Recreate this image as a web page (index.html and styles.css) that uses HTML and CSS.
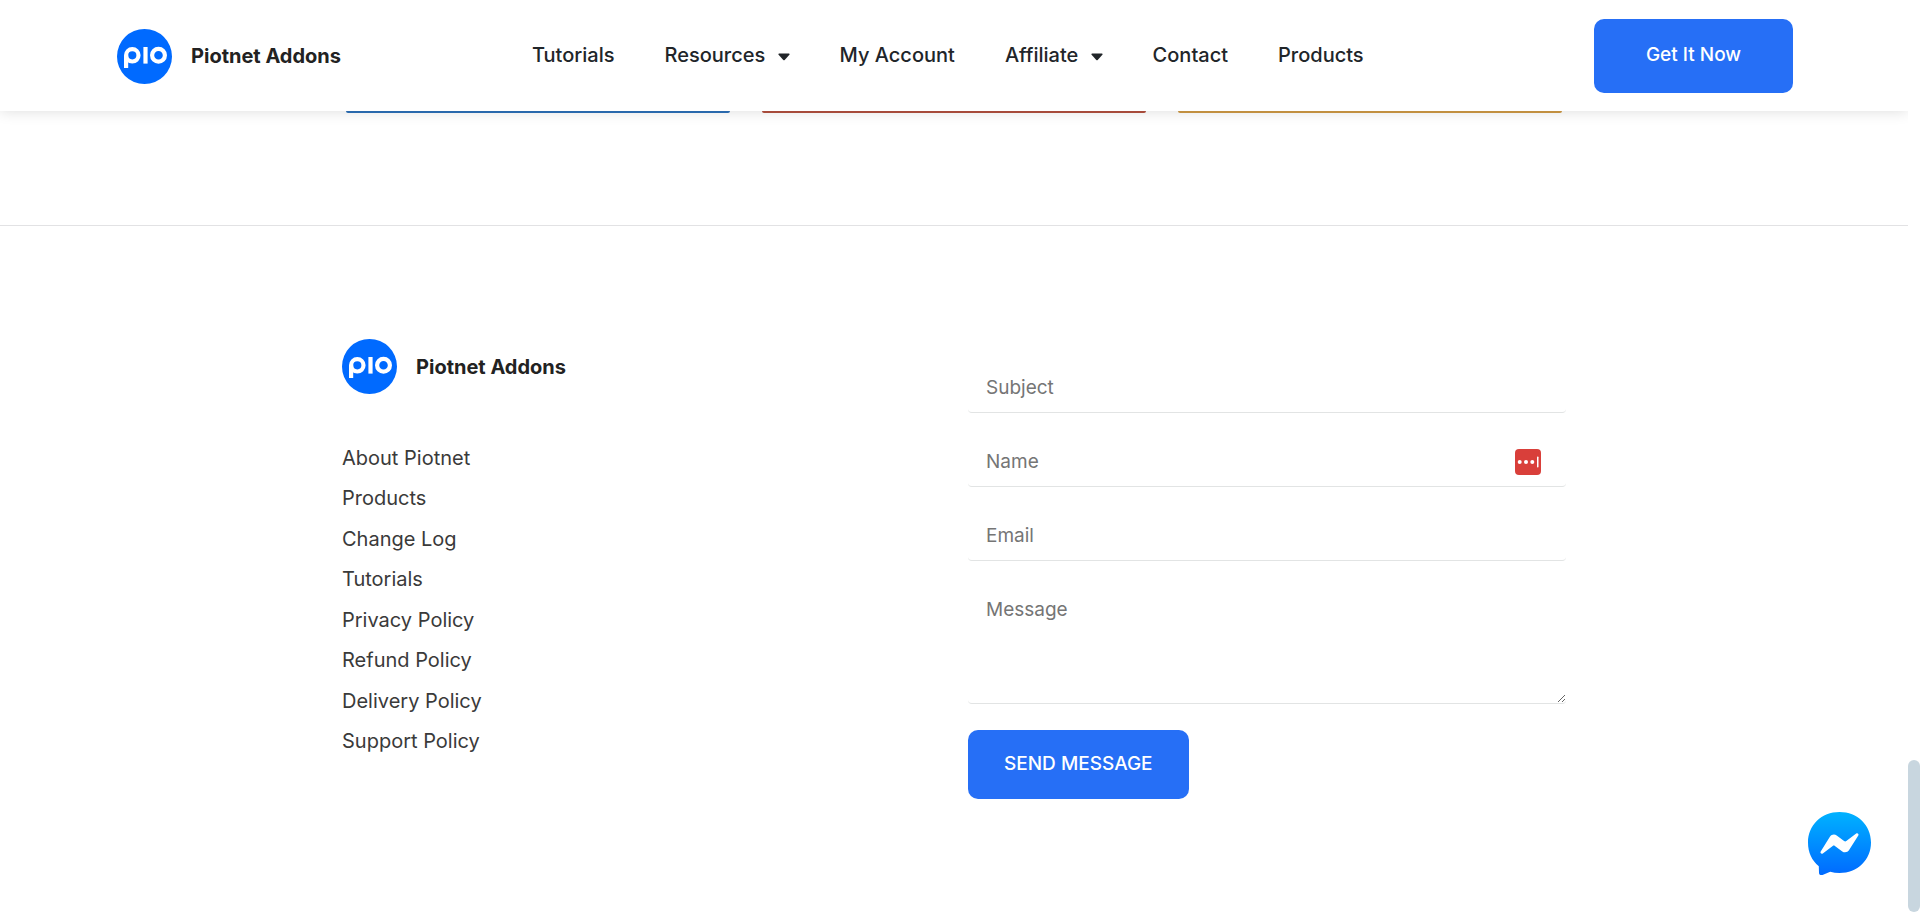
FILE: index.html
```
<!DOCTYPE html>
<html lang="en">
<head>
    <meta charset="utf-8">
    <meta name="viewport" content="width=device-width, initial-scale=1">
    <title>Piotnet Addons</title>
    <link rel="stylesheet" href="styles.css">
</head>
<body>
    <svg class="sprite" aria-hidden="true">
        <symbol id="logo" viewBox="0 0 55 55">
            <circle cx="27.5" cy="27.5" r="27.5" fill="#006aff"/>
            <g fill="none" stroke="#fff" stroke-width="4.2">
                <circle cx="15.3" cy="26.3" r="6.2"/>
                <path d="M9.1 26.3v12.7"/>
                <path d="M28.5 18v16.6"/>
                <circle cx="41.5" cy="26.3" r="6.4"/>
            </g>
        </symbol>
        <symbol id="caret" viewBox="0 0 12 8">
            <path d="M1 .5h10q1 .3.4 1.200L6.700 6.900q-.7.6-1.400 0L.6 1.700Q0 .8 1 .5z" fill="#212529"/>
        </symbol>
    </svg>

    <header class="header">
        <a class="brand" href="#">
            <svg class="logo"><use href="#logo"/></svg>
            <span>Piotnet Addons</span>
        </a>
        <nav class="nav">
            <a href="#">Tutorials</a>
            <a href="#">Resources <svg class="caret"><use href="#caret"/></svg></a>
            <a href="#">My Account</a>
            <a href="#">Affiliate <svg class="caret"><use href="#caret"/></svg></a>
            <a href="#">Contact</a>
            <a href="#">Products</a>
        </nav>
        <a class="button get-now" href="#">Get It Now</a>
    </header>

    <main class="cards">
        <div class="card blue"></div>
        <div class="card red"></div>
        <div class="card yellow"></div>
    </main>

    <footer class="footer">
        <div class="container">
            <div class="footer-links">
                <a class="brand" href="#">
                    <svg class="logo"><use href="#logo"/></svg>
                    <span>Piotnet Addons</span>
                </a>
                <ul>
                    <li><a href="#">About Piotnet</a></li>
                    <li><a href="#">Products</a></li>
                    <li><a href="#">Change Log</a></li>
                    <li><a href="#">Tutorials</a></li>
                    <li><a href="#">Privacy Policy</a></li>
                    <li><a href="#">Refund Policy</a></li>
                    <li><a href="#">Delivery Policy</a></li>
                    <li><a href="#">Support Policy</a></li>
                </ul>
            </div>
            <form class="contact-form">
                <input type="text" name="subject" placeholder="Subject" aria-label="Subject">
                <div class="field">
                    <input type="text" name="name" placeholder="Name" aria-label="Name">
                    <svg class="field-icon" viewBox="0 0 26 26" aria-hidden="true">
                        <rect width="26" height="26" rx="4" fill="#d93f3a"/>
                        <g fill="#fff">
                            <circle cx="4.700" cy="13" r="2"/>
                            <circle cx="11" cy="13" r="2"/>
                            <circle cx="17.300" cy="13" r="2"/>
                            <rect x="22" y="7.500" width="1.500" height="11" rx=".7"/>
                        </g>
                    </svg>
                </div>
                <input type="email" name="email" placeholder="Email" aria-label="Email">
                <textarea name="message" placeholder="Message" aria-label="Message"></textarea>
                <button class="button send" type="submit">SEND MESSAGE</button>
            </form>
        </div>
    </footer>

    <button class="chat" type="button" aria-label="Open chat">
        <svg viewBox="0 0 63 63">
            <defs>
                <linearGradient id="chat-bg" x1="0" y1="0" x2="0" y2="1">
                    <stop offset="0" stop-color="#00b2ff"/>
                    <stop offset="1" stop-color="#006aff"/>
                </linearGradient>
            </defs>
            <path d="M31.500 0C49.500 0 63 13.200 63 30.500S49.500 61 31.500 61c-3.300 0-6.400-.4-9.300-1.200L14.500 62.900c-1.900.7-3.500-.3-3.500-2.200l-.2-6.500C4 48.800 0 40.500 0 30.500 0 13.200 13.500 0 31.500 0z" fill="url(#chat-bg)"/>
            <path d="M12.700 39.400l9.200-14.600c1.500-2.300 4.600-2.900 6.800-1.300l7.400 5.500c.7.500 1.600.5 2.200 0l9.900-7.500c1.300-1 3 .6 2.100 2l-9.200 14.600c-1.500 2.300-4.600 2.900-6.800 1.300l-7.400-5.500c-.7-.5-1.600-.5-2.200 0l-9.900 7.500c-1.300 1-3-.6-2.100-2z" fill="#fff"/>
        </svg>
    </button>
    <div class="scrollbar">
        <div class="scroll-thumb"></div>
    </div>
</body>
</html>
```

FILE: styles.css
```
* {
    box-sizing: border-box;
}
body {
    margin: 0;
    padding-right: 12px;
    background-color: #fff;
    color: #212529;
    font-family: 'Inter', sans-serif;
    font-size: 20px;
    line-height: 24px;
}
a {
    color: inherit;
    text-decoration: none;
}
.sprite {
    display: none;
}

/* Header */
.header {
    position: relative;
    display: flex;
    align-items: center;
    padding: 19px 115px 18px 117px;
    background-color: #fff;
    box-shadow: 0 0 14px rgba(0, 0, 0, 0.14);
}
.brand {
    display: flex;
    align-items: center;
    gap: 19px;
    color: #222;
    font-weight: 700;
}
.header .brand {
    flex: 0 0 415px;
}
.logo {
    width: 55px;
    height: 55px;
}
.nav {
    display: flex;
    gap: 50px;
    flex: 1;
    padding-bottom: 2px;
    font-weight: 500;
    white-space: nowrap;
}
.caret {
    width: 12px;
    height: 8px;
    margin-left: 7px;
    vertical-align: 1px;
}
.button {
    border: none;
    border-radius: 10px;
    background-color: #266ff6;
    color: #fff;
    font-family: inherit;
    font-size: 19px;
    font-weight: 500;
    line-height: 24px;
    text-align: center;
    cursor: pointer;
}
.get-now {
    min-width: 199px;
    padding: 24px 48px 26px;
}

/* Cards */
.cards {
    display: grid;
    grid-template-columns: repeat(3, 1fr);
    gap: 32px;
    max-width: 1216px;
    margin: 0 auto 112px;
}
.card {
    height: 2px;
    border-radius: 0 0 4px 4px;
}
.blue {
    background-color: #2c70b8;
}
.red {
    background-color: #b2503f;
}
.yellow {
    background-color: #cf9a45;
}

/* Footer */
.footer {
    padding: 113px 24px;
    border-top: 1px solid #e2e2e4;
}
.container {
    display: grid;
    grid-template-columns: 1fr 598px;
    max-width: 1224px;
    margin: 0 auto;
}
.footer-links ul {
    display: flex;
    flex-direction: column;
    justify-content: space-between;
    min-height: 307px;
    margin: 52px 0 0;
    padding: 0;
    list-style: none;
    color: #3a3a3a;
}
.contact-form {
    display: flex;
    flex-direction: column;
    align-items: flex-start;
    gap: 26px;
    padding-top: 26px;
}
.field {
    position: relative;
    width: 100%;
}
.contact-form input,
.contact-form textarea {
    display: block;
    width: 100%;
    height: 48px;
    padding: 0 18px 2px;
    border: 0 solid #e2e4e4;
    border-bottom-width: 1px;
    border-radius: 4px;
    background-color: transparent;
    font-family: inherit;
    font-size: 19px;
    line-height: 24px;
    outline: none;
}
.contact-form textarea {
    height: 117px;
    padding-top: 11px;
    resize: vertical;
}
.contact-form ::placeholder {
    color: #757575;
}
.field-icon {
    position: absolute;
    top: 10px;
    right: 25px;
    width: 26px;
    height: 26px;
}
.send {
    padding: 22px 36px 23px;
}

.chat {
    position: fixed;
    right: 49px;
    bottom: 37px;
    width: 63px;
    height: 63px;
    padding: 0;
    border: none;
    background: none;
    cursor: pointer;
}

/* Scrollbar */
.scrollbar {
    position: fixed;
    top: 0;
    right: 0;
    bottom: 0;
    display: flex;
    align-items: flex-end;
    width: 12px;
    background-color: #fff;
}
.scroll-thumb {
    width: 12px;
    height: 152px;
    border-radius: 6px;
    background-color: #c8d6df;
}
```
